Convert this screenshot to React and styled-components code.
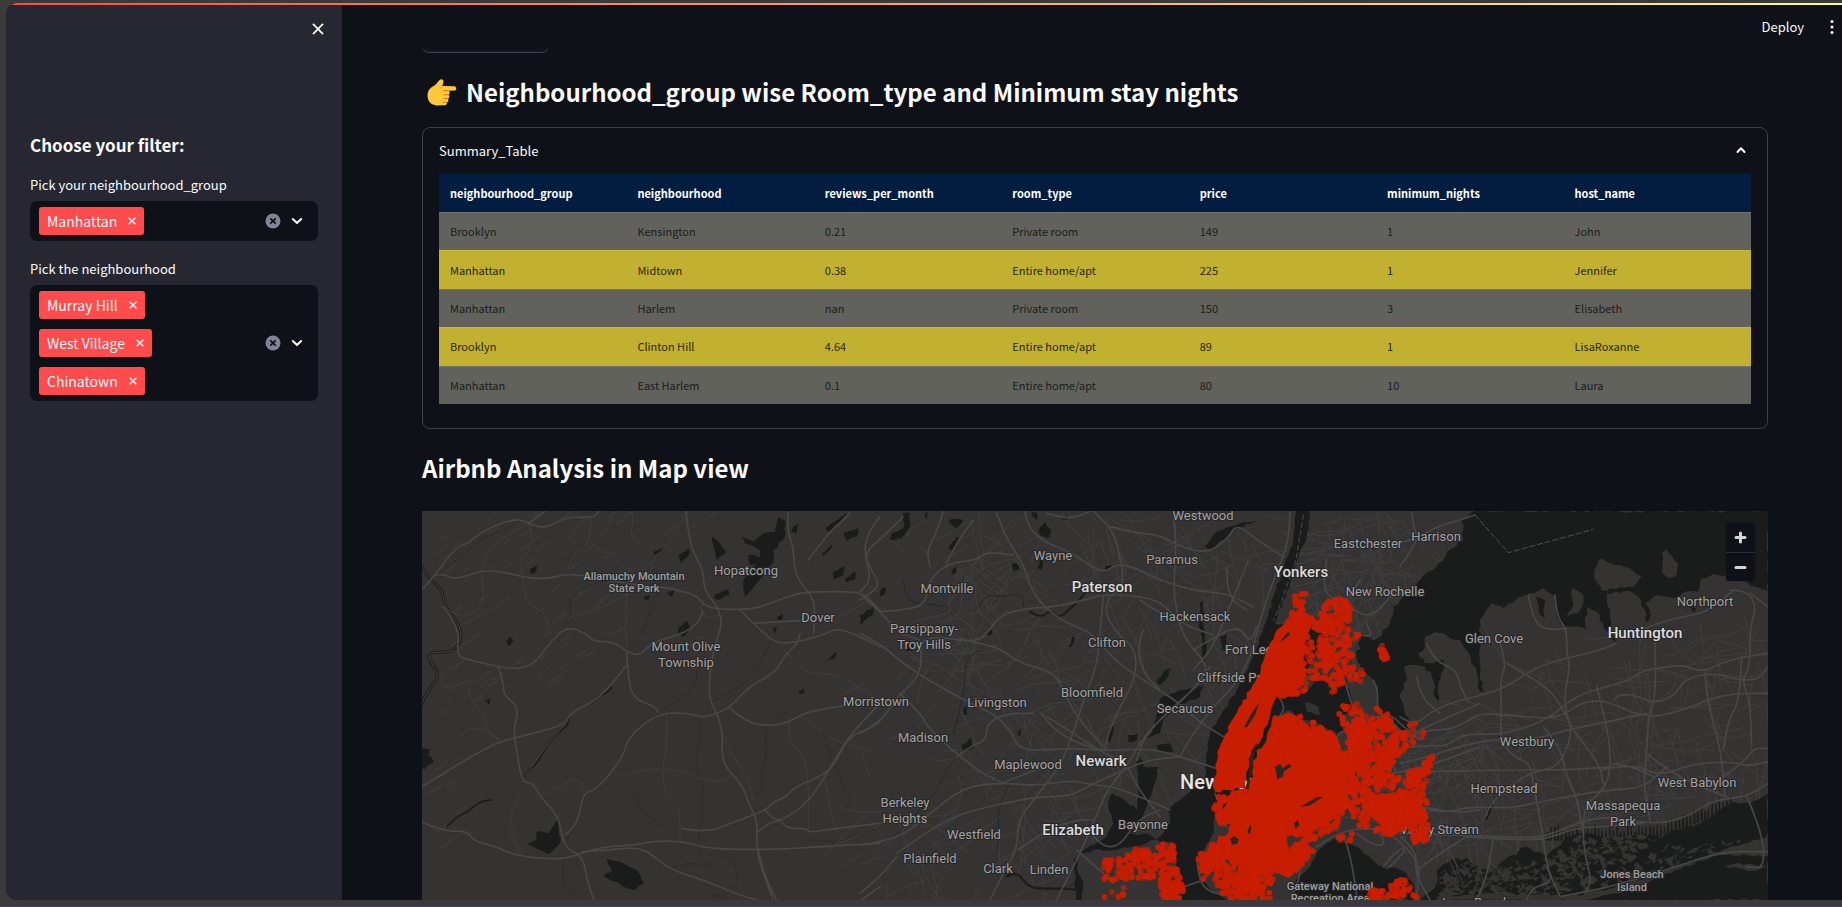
import React, { useState } from "react";
import styled, { createGlobalStyle } from "styled-components";

const sans = `"Noto Sans CJK SC", "Noto Sans", sans-serif`;

const GlobalStyle = createGlobalStyle`
  * { box-sizing: border-box; }
  body { margin: 0; background: #3a3a39; color: #fafafa; font-family: ${sans}; font-size: 14px; }
  button, input { font: inherit; color: inherit; }
`;

/* ---------- shell ---------- */
const Frame = styled.div`
  height: 100vh;
  padding: 3px 0 7px 6px;
  display: flex;
  background: linear-gradient(#3a3a39 0 calc(100% - 1px), #493f5c calc(100% - 1px));
`;
const Window = styled.div`
  flex: 1;
  min-width: 0;
  display: flex;
  flex-direction: column;
  background: #0e1117;
  border-radius: 12px 0 0 12px;
  overflow: hidden;
`;
const Decoration = styled.div`
  flex: none;
  height: 2px;
  background: linear-gradient(90deg, #ff4b4b, #fffd80);
`;
const Body = styled.div`
  flex: 1;
  min-height: 0;
  display: flex;
`;
const Sidebar = styled.aside`
  flex: none;
  width: 336px;
  padding: 18px 24px;
  background: #262730;
`;
const CloseRow = styled.div`
  display: flex;
  justify-content: flex-end;
  margin: 0 -6px 98px 0;
`;
const IconButton = styled.button`
  display: grid;
  place-items: center;
  padding: 0;
  border: 0;
  background: none;
  cursor: pointer;
  svg { display: block; }
`;
const SidebarTitle = styled.h2`
  margin: 0 0 16px;
  font-size: 17px;
  line-height: 24px;
  font-weight: 600;
`;
const Field = styled.div`
  margin-bottom: 16px;
`;
const Label = styled.label`
  display: block;
  height: 28px;
  font-size: 13px;
  line-height: 24px;
`;
const SelectBox = styled.div`
  display: flex;
  align-items: center;
  gap: 10px;
  padding: 6px 15px 6px 9px;
  border-radius: 7px;
  background: #0e1117;
`;
const Tags = styled.div`
  flex: 1;
  min-width: 0;
  display: flex;
  flex-wrap: wrap;
  gap: 10px;
`;
const Tag = styled.span`
  display: flex;
  align-items: center;
  gap: 11px;
  height: 28px;
  padding: 0 8px;
  border-radius: 3px;
  background: #ff4b4b;
  font-size: 14px;
  line-height: 28px;
`;
const TagInput = styled.input`
  flex: 1;
  width: 20px;
  min-width: 20px;
  padding: 0;
  border: 0;
  outline: 0;
  background: none;
`;

/* ---------- main column ---------- */
const Main = styled.div`
  flex: 1;
  min-width: 0;
  display: flex;
  flex-direction: column;
`;
const Header = styled.header`
  flex: none;
  height: 44px;
  padding-right: 8px;
  display: flex;
  align-items: center;
  justify-content: flex-end;
  gap: 26px;
`;
const DeployButton = styled.button`
  padding: 0;
  border: 0;
  background: none;
  font-size: 13px;
  line-height: 20px;
`;
const Scroller = styled.main`
  flex: 1;
  min-height: 0;
  padding: 0 74px 0 80px;
  overflow-y: auto;
  scrollbar-width: none;
`;
const DownloadButton = styled.button`
  display: block;
  width: 127px;
  height: 40px;
  margin-top: -36px;
  border: 1px solid #41444c;
  border-radius: 7px;
  background: #13161d;
`;
const Title = styled.h3`
  display: flex;
  align-items: center;
  gap: 8px;
  margin: 21px 0 ${(p) => (p.$tight ? 17 : 25)}px;
  font-size: 24px;
  line-height: 36px;
  font-weight: 600;
`;
const Expander = styled.section`
  padding: 0 16px 24px;
  border: 1px solid #3d4045;
  border-radius: 8px;
`;
const Summary = styled.button`
  width: 100%;
  height: 46px;
  padding: 0 4px 2px 0;
  display: flex;
  align-items: center;
  justify-content: space-between;
  border: 0;
  background: none;
  font-size: 13px;
`;
const Table = styled.table`
  width: 100%;
  height: 230px;
  table-layout: fixed;
  border-collapse: collapse;
  font-size: 11px;
  line-height: 18px;
  text-align: left;
`;
const HeadCell = styled.th`
  height: 38px;
  padding: 0 11px;
  background: #021d3f;
  color: #ffffff;
  font-weight: 700;
`;
const Row = styled.tr`
  background: ${(p) => (p.$gold ? "#c2b131" : "#62625c")};
  color: ${(p) => (p.$gold ? "#29260a" : "#1c1c1b")};
  box-shadow: inset 0 1px 0 rgba(255, 255, 255, 0.1);
`;
const Cell = styled.td`
  padding: 0 11px;
`;

/* ---------- map ---------- */
const MapPanel = styled.div`
  position: relative;
  height: 500px;
  background: #343332;
`;
const MapCanvas = styled.svg`
  display: block;
  width: 100%;
  height: 100%;
`;
const Place = styled.text`
  font-family: Roboto, "Liberation Sans", sans-serif;
  font-size: ${(p) => ({ xl: 20, lg: 15, md: 13, sm: 11 })[p.$size]}px;
  font-weight: ${(p) => (p.$size === "md" ? 400 : 500)};
  fill: ${(p) => ({ xl: "#e6e6e6", lg: "#dcdcdc", md: "#a2a2a2", sm: "#a0a0a0" })[p.$size]};
  stroke: #262626;
  stroke-width: 2px;
  stroke-linejoin: round;
  paint-order: stroke;
`;
const ZoomControl = styled.div`
  position: absolute;
  top: 12px;
  right: 13px;
  width: 29px;
  border-radius: 3px;
  background: #0e1117;
  box-shadow: 0 0 0 1px rgba(0, 0, 0, 0.1);
`;
const ZoomButton = styled(IconButton)`
  width: 29px;
  height: 29px;
  & + & { border-top: 1px solid #2a2c33; }
`;

/* ---------- icons ---------- */
const Cross = ({ size, width, color = "currentColor" }) => (
  <svg width={size} height={size} viewBox="0 0 10 10" stroke={color} strokeWidth={width} fill="none">
    <path d="M.8.8 9.2 9.2M9.2.8.8 9.2" />
  </svg>
);
const Chevron = ({ up, size = 12 }) => (
  <svg width={size} height={size} viewBox="0 0 12 12" stroke="#fafafa" strokeWidth="2" fill="none" strokeLinecap="round" strokeLinejoin="round">
    <path d={up ? "M2.500 8 6 4.200l3.500 3.800" : "M1.800 4 6 8l4.200-4"} />
  </svg>
);
const ClearIcon = () => (
  <svg width="16" height="16" viewBox="0 0 16 16">
    <circle cx="8" cy="8" r="7.500" fill="#808495" />
    <path d="m5.300 5.300 5.400 5.400M10.700 5.300l-5.400 5.400" stroke="#0e1117" strokeWidth="1.700" />
  </svg>
);
const Kebab = () => (
  <svg width="4" height="16" viewBox="0 0 4 16" fill="#fafafa">
    <circle cx="2" cy="2.500" r="1.500" />
    <circle cx="2" cy="8" r="1.500" />
    <circle cx="2" cy="13.500" r="1.500" />
  </svg>
);
const PointingHand = () => (
  <svg width="36" height="30" viewBox="0 0 36 30" role="img" aria-label="pointing right">
    <path d="M18.500 2.500c2-.8 3.400 1 2.900 2.800L20.300 9l12 .2c2.600.1 2.700 4.300 0 4.400l-6 .2c1.800.6 1.900 3.200.2 3.900 1.300 1 1.100 3.400-.6 3.900 1.100 1.100.6 3.400-1 3.800.3 1.800-.8 2.800-2.600 2.900l-7.300.1C9 28.400 5.500 24.300 5.500 18.600c0-5.200 3.200-8.200 6.500-9.800 2.600-1.300 4.400-5.400 6.500-6.300z" fill="#ffc83d" />
    <path d="M25.800 13.700h-4.300M26.500 17.800h-4.600M25.900 21.700h-4M24.800 25.400h-3.300" stroke="#d67d00" strokeWidth="1" fill="none" strokeLinecap="round" />
    <path d="M20.300 9 19 12.500" stroke="#e89b18" strokeWidth=".8" fill="none" />
  </svg>
);

/* ---------- map data ---------- */
const seeded = (seed) => {
  let s = seed * 2654435761;
  return () => {
    s = (s + 0x6d2b79f5) | 0;
    let t = Math.imul(s ^ (s >>> 15), 1 | s);
    t = (t + Math.imul(t ^ (t >>> 7), 61 | t)) ^ t;
    return ((t ^ (t >>> 14)) >>> 0) / 4294967296;
  };
};
const pts = (str) => str.trim().split(/\s+/).map((p) => p.split(",").map(Number));
const inside = ([x, y], poly) => {
  let hit = false;
  for (let i = 0, j = poly.length - 1; i < poly.length; j = i++) {
    const [xi, yi] = poly[i];
    const [xj, yj] = poly[j];
    if (yi > y !== yj > y && x < ((xj - xi) * (y - yi)) / (yj - yi) + xi) hit = !hit;
  }
  return hit;
};
const scatter = (outline, count, seed) => {
  const poly = pts(outline);
  const xs = poly.map((p) => p[0]);
  const ys = poly.map((p) => p[1]);
  const [x0, x1, y0, y1] = [Math.min(...xs), Math.max(...xs), Math.min(...ys), Math.max(...ys)];
  const rnd = seeded(seed);
  const out = [];
  let guard = 0;
  while (out.length < count && guard++ < count * 20) {
    const p = [x0 + rnd() * (x1 - x0), y0 + rnd() * (y1 - y0)];
    if (inside(p, poly)) out.push(p);
  }
  return out;
};
/* adds small irregular steps to a shoreline */
const rough = (outline, amp, seed) => {
  const rnd = seeded(seed);
  const p = pts(outline);
  let d = "";
  p.forEach(([x, y], i) => {
    const [nx, ny] = p[(i + 1) % p.length];
    const n = Math.max(1, Math.round(Math.hypot(nx - x, ny - y) / 14));
    for (let k = 0; k < n; k++) {
      const t = k / n;
      const j = k ? amp : 0;
      d += `${d ? "L" : "M"}${Math.round(x + (nx - x) * t + (rnd() - 0.5) * j)} ${Math.round(y + (ny - y) * t + (rnd() - 0.5) * j)}`;
    }
  });
  return d + "Z";
};
const curve = (str) => {
  const p = pts(str);
  let d = `M${p[0]}`;
  for (let i = 1; i < p.length - 1; i++) {
    d += `Q${p[i]} ${(p[i][0] + p[i + 1][0]) / 2},${(p[i][1] + p[i + 1][1]) / 2}`;
  }
  return d + `L${p[p.length - 1]}`;
};
/* side streets: a loose, wandering grid within an outline */
const streets = (outline, count, seed, lean) => {
  const rnd = seeded(seed);
  return scatter(outline, count, seed + 5).map(([x, y]) => {
    let a = lean + (rnd() < 0.5 ? 0 : Math.PI / 2) + (rnd() - 0.5) * 0.7;
    let d = `M${Math.round(x)} ${Math.round(y)}`;
    const steps = 3 + Math.floor(rnd() * 5);
    for (let i = 0; i < steps; i++) {
      a += (rnd() - 0.5) * 0.6;
      const l = 14 + rnd() * 26;
      d += `l${Math.round(Math.cos(a) * l)} ${Math.round(Math.sin(a) * l)}`;
    }
    return d;
  }).join("");
};

const WEST_ROADS = [
  "6,270 45,225 110,140 145,130 195,88 290,54 325,70 375,86 440,50 520,54 538,33",
  "45,225 75,222 100,240 205,205 325,235 390,235 450,220 560,240 690,262 735,262 770,270 830,285 860,325 960,330 1030,320 1120,282 1180,275 1320,275 1350,300 1380,332",
  "325,70 375,33", "798,33 805,100 820,160 850,210 852,270 885,310 900,340 905,380 880,450 862,585 892,640 908,700 905,760 915,800 970,860 985,910 1012,960 1010,1040 1022,1100 1060,1200",
  "1105,33 1100,85 1120,140 1122,200 1140,250 1180,290 1185,350 1180,400",
  "1000,370 1140,362", "960,330 1030,400 1080,436 1200,410 1250,384 1310,405 1380,440",
  "1140,400 1135,430 1090,470 1070,515 985,560 930,625 850,655 810,640 715,638 625,710 610,770 535,865 490,880 480,940 460,985 435,1005",
  "70,320 118,380 110,465 140,478 235,500 295,508 345,490 380,440 440,376 505,405 520,425 580,425 620,455 660,468 690,430 820,390 850,335",
  "235,500 250,545 250,585 298,622 280,690 290,750 305,845 340,850 360,890 418,950 430,1040 490,1070 500,1140 522,1200",
  "6,860 150,770 240,725 290,712 400,685 440,665 450,640 520,605 570,560 620,495",
  "620,455 625,540 640,595 705,620 715,638", "6,966 70,995 140,992 165,1025 215,1035 290,1068 420,1080 490,1058 550,1040 650,1035 700,1022 790,1025 850,1042 930,1048 1090,1048 1230,1038 1380,1030",
  "490,1055 560,1050 650,1042 690,1060 750,1108 850,1140 950,1182 1010,1200",
  "785,985 860,998 930,970 1040,930 1060,905 1100,890 1125,860 1200,830 1240,800 1285,710 1350,685 1380,665",
  "1010,1000 1040,970 1085,962 1170,905 1250,770 1290,705 1380,610",
  "930,625 980,670 1060,678 1110,665 1150,640 1220,625 1270,618",
  "1085,962 1090,985 1160,985 1165,998 1250,985 1380,970", "1035,930 1055,955 1085,962",
  "1165,180 1220,105 1270,60 1290,38", "1380,50 1350,85 1330,150 1355,240 1320,275",
  "1012,1040 1030,1120 1070,1200", "1325,1200 1380,1160",
];
const WEST_LANES = [
  "75,320 110,355 165,340 195,300 180,210 215,130 325,70", "325,70 340,100 330,155 300,180 310,260 325,320 370,330 390,390",
  "515,55 510,130 470,150 440,210", "515,130 540,155 580,160 620,210", "575,33 580,70 520,120",
  "635,33 640,70 630,100 670,150", "798,50 770,80 750,130 700,170 690,230", "120,380 190,340 260,300 305,265",
  "145,560 150,600 195,650 200,690 240,725", "235,500 190,540 130,545 70,575 60,520 110,500", "150,685 200,690 240,720",
  "305,845 340,790 400,715 445,660", "360,890 430,850 480,830 490,880", "740,638 740,750 725,810 740,905 780,920 780,1020",
  "575,810 600,840 650,810 760,805 850,840 900,845 940,825", "905,700 950,790 990,850 1000,910",
  "1080,436 1120,480 1160,520 1250,520 1380,600", "1350,300 1300,330 1260,340 1240,380", "1110,665 1100,720 1150,760 1165,830 1165,1000",
  "1140,650 1200,690 1250,725 1380,760", "1215,840 1230,930 1250,990 1280,1035", "270,1000 300,1060 295,1068",
  "305,870 270,930 275,1000 310,1060", "620,440 615,350 620,280 630,200", "900,340 880,355 840,345 850,300", "1380,935 1290,940 1240,900 1215,850",
  "450,350 540,330 620,280 700,260", "1325,760 1340,820 1380,870", "820,450 800,430 850,400 870,470 865,520",
];
const WEST_STREAMS = [
  "50,225 130,165 190,110 260,88 300,60", "415,425 440,400 475,370 450,365 450,290 500,260 560,240", "830,470 840,560 760,610 715,640",
  "830,650 850,690 825,760 830,820 850,850 845,900 850,960 830,1020 840,1080 890,1100 900,1070 935,1050",
  "1120,630 1060,650 1035,690 1040,780 1020,810 1030,870 1000,885", "1210,690 1230,780 1260,820 1270,870 1295,890 1280,930",
  "1060,420 1020,480 1010,520 960,560 900,590 860,620", "630,875 655,890 650,920 690,950 725,975", "430,1080 425,1130 440,1170 470,1180 472,1200",
  "750,1105 800,1085 870,1100", "930,1060 960,1130 940,1170 910,1190 870,1185", "720,260 690,330 670,400 620,460",
  "500,880 470,970 440,1020", "1170,1020 1260,1030 1300,1000 1380,985",
];
const WEST_LAKES = [
  "965,110 1000,125 1030,100 1065,95 1075,50 1095,60 1095,110 1060,150 1060,185 1010,250 975,290 970,240 1020,185 1020,150 975,130",
  "985,165 1040,170 1060,190 990,195", "1120,80 1138,70 1130,100 1112,95", "875,110 900,130 918,155 890,180 885,155", "885,285 925,268 928,285 895,300 882,295",
  "775,165 805,145 810,160 785,190", "700,155 730,142 725,155 705,165", "330,205 350,195 345,218 332,222", "258,425 270,410 280,420 268,440",
  "775,385 800,362 810,385 790,410 775,400", "740,280 762,270 755,290", "672,290 690,285 685,300 675,300", "1072,350 1088,342 1088,358 1074,360",
  "1060,380 1072,385 1062,405", "1270,100 1315,85 1310,110 1280,122", "1205,160 1240,132 1225,155 1210,168", "1240,215 1275,198 1270,225 1240,238",
  "1275,235 1305,215 1305,240 1280,248", "1340,330 1360,318 1358,345 1320,375 1325,360", "1215,485 1250,455 1245,475", "1135,575 1150,566 1155,578 1140,582",
  "195,600 212,598 208,615", "6,745 30,748 25,765 42,785 15,808 6,805", "318,1035 350,1020 350,995 385,1000 415,955 420,1030 385,1062 340,1040",
  "560,1078 600,1085 650,1110 672,1150 645,1170 610,1160 550,1128 575,1115",
  "1215,85 1285,38 1265,60 1225,95",
];
const WEST_CREEKS = ["308,840 325,808 345,798 380,740 400,715 425,688 440,680 448,656", "82,978 110,950 140,938 165,915 190,902 214,900", "515,608 540,585 560,580 575,562"];
const CENTRAL_ROADS = [
  "0,400 60,430 140,500 240,560 340,615 400,640 450,690 480,750 560,750 640,745 740,752 870,745 960,770 1070,805",
  "0,700 60,670 120,580 160,550 185,500 180,420 240,410 320,425 370,415 420,345 500,325 560,322 640,310 720,285 800,285 900,300 960,370 1060,405",
  "0,280 60,335 120,400 180,420", "300,415 360,430 420,445 480,490 560,510 600,540 640,640 730,740",
  "410,40 440,120 490,190 510,260 550,320 620,370 700,400 760,480 880,560 960,610 1010,660 1090,710",
  "60,335 150,330 200,305 200,250 260,190 350,180 380,155 460,165",
  "495,33 500,80 560,130 620,150 680,190 730,220 770,190 830,205 900,240 960,260 1020,275 1100,280 1180,320",
  "700,33 750,80 770,130 785,190 790,260 745,290 735,340 770,400 830,450 825,540 780,620 745,700 735,750",
  "750,80 830,100 900,105 960,140 1040,160 1100,120 1130,70 1190,120 1270,170",
  "940,33 950,130 940,260 950,340 975,420 1050,500 1010,560 940,620 880,680 850,720 830,780",
  "690,33 640,60 560,40", "1290,33 1290,120 1240,240 1200,360 1170,480 1120,560 1060,620 1000,700 960,770",
  "1100,200 1100,290 1160,330", "1165,180 1130,270 1100,340 1060,440 1000,510",
  "0,1035 110,1020 200,950 310,860 430,848 530,858 630,840 700,855 760,860 840,890 930,930",
  "110,1060 180,1010 260,960 340,930 480,900 540,890 630,890 690,855 770,820 860,780 960,770",
  "0,1180 60,1130 110,1070", "390,1200 440,1100 470,1050 475,960 520,900 600,800 640,700 670,600 710,500 720,400 730,290",
  "590,1200 660,1060 700,970 740,870 800,800 850,710 920,640 990,580 1050,500",
  "430,848 380,830 300,770 210,690 180,640 120,580", "290,770 330,740 380,720 380,670 440,640 520,640",
  "560,650 640,700 730,760 800,790 830,860 900,950", "545,640 570,680 650,730 730,750",
  "430,848 500,820 560,800", "650,1050 720,1110 760,1150", "680,980 720,1040 780,1040 830,960 900,930",
  "475,1050 540,1000 640,960 700,960", "850,390 830,440 850,520 900,570", "840,300 880,330 940,350", "1000,450 1080,400 1140,380 1170,430 1190,380",
  "130,50 70,110 10,160 40,220 60,260 0,300", "250,33 230,100 200,150 210,200", "340,60 300,110 260,190",
];
const CENTRAL_LAKES = [
  "130,38 150,38 150,80 125,115 90,120 95,100 130,85", "195,38 205,38 200,60", "265,60 310,60 290,85 275,75", "265,145 290,110 300,115 275,150",
  "275,210 290,198 288,218 275,222", "540,80 555,65 575,90 565,115 540,105", "515,36 530,38 530,60 518,50", "600,55 625,45 620,60", "455,190 470,190 478,210 460,212",
  "540,180 550,185 545,210 532,205", "60,275 75,260 72,285 58,290", "0,345 45,330 20,355 0,372", "735,200 770,190 750,205 735,220", "625,440 640,408 645,412 632,442",
  "380,400 395,390 398,402 385,408", "135,435 160,430 160,450 140,455", "310,625 322,618 322,645 312,645", "472,700 480,688 480,710",
  "305,735 330,712 342,745 310,755", "805,705 835,700 830,720 805,725", "740,720 755,680 762,680 750,725",
  "890,550 910,515 935,505 925,530 900,555", "875,700 890,640 905,590 960,570 1030,560 1020,590 950,620 910,660 900,700 840,720",
  "1035,140 1060,105 1110,80 1190,62 1120,90 1050,150", "1085,450 1080,410 1100,400 1095,450", "890,735 930,730 940,755 895,755",
  "1020,310 1032,300 1030,370 1040,450 1035,500 1025,480 1028,420 1018,370",
];
const HUDSON = "1308,33 1300,120 1275,190 1240,290 1205,400 1175,480 1130,570 1080,650 1050,700 1040,760 1035,830 1010,860 960,900 925,930 930,970 900,1010 860,1030 820,1040 760,1050 700,1050 650,1070 655,1120 670,1150 665,1200 650,1200 645,1120 640,1080 680,1045 740,1010 760,970 745,920 755,880 800,905 830,930 835,870 830,800 840,760 850,800 895,800 885,850 860,920 835,975 800,1005 860,1000 900,1025 940,1030 960,1090 975,1200 1060,1200 1010,1150 1010,1080 1060,1000 1060,960 1150,860 1400,400 1245,370 1290,250 1312,180 1340,110 1350,33";
const BAYS = [
  "330,470 355,425 400,395 455,380 480,345 520,400 550,340 570,400 585,440 540,470 560,500 525,530 500,505 470,490 430,480 385,450",
  "285,560 300,545 300,620 270,690 255,700 258,640",
  "400,975 430,940 470,880 520,835 560,850 590,860 680,930 700,920 740,940 770,1000 770,1020 400,1020",
  "60,1020 50,920 40,860 20,840 90,700 160,700 160,820 110,900 120,960 200,1020",
];
const SOUND = "225,33 1104,33 1104,270 1070,262 1040,245 985,225 940,222 905,235 895,275 850,278 835,292 760,290 735,310 752,335 740,350 715,290 690,272 620,280 630,330 636,420 650,425 610,385 590,335 560,322 555,370 560,388 500,380 482,370 470,330 465,290 430,265 390,280 330,310 310,325 275,310 240,360 235,390 262,420 240,440 240,520 252,575 240,575 230,520 200,450 180,420 105,395 75,410 75,440 55,460 75,490 130,480 130,510 115,560 115,605 105,590 95,530 75,500 25,495 12,500 22,540 0,580 14,640 30,660 20,690 0,690 -20,665 -65,620 -65,560 -90,530 -120,510 -130,470 -115,400 -80,420 -60,410 -30,370 -20,320 20,280 60,240 100,210 150,150 190,120 185,60";
const SOUTH_SEA = "1104,880 1050,910 1000,905 960,930 900,970 850,985 780,1005 700,1005 620,1015 560,1000 500,1010 440,1070 380,1040 300,1090 240,1110 200,1075 150,1080 110,1110 110,1150 60,1200 1104,1200";
const EAST_LAND = [
  "583,210 605,175 630,190 690,205 725,230 700,260 605,270 583,235", "785,160 800,148 835,190 825,230 800,232 785,215",
  "515,265 550,285 550,310 530,340 500,350 520,315", "480,1195 640,1165 800,1110 960,1055 1060,1020 1104,1010 1104,1068 960,1062 800,1120 660,1180 560,1200 480,1200",
  "975,1100 1020,1090 1104,1100 1060,1112", "110,1190 300,1180 480,1185 480,1200 110,1200",
];
const EAST_ROADS = [
  "35,33 40,80 55,120 0,200", "0,130 60,110 110,80 180,60 225,45", "0,720 70,690 150,690 200,665 240,640 310,645 380,650 450,655 500,640 540,610 600,600 660,620 700,640 770,650 850,630 920,600 1000,580 1104,580",
  "0,745 80,735 140,740 190,700 300,705 400,675 460,645 500,610 550,580 620,560 690,540 720,515 800,500 850,495 910,518 980,480 1104,460",
  "0,790 90,770 190,735 300,715 400,720 500,690 600,670 740,640", "0,650 40,680 100,630 180,600 250,585 320,560 380,520 440,490 520,470 600,450 650,430",
  "0,760 40,700 100,690", "465,285 470,350 500,385 500,460 510,500 490,600 510,680 560,740 600,800 610,850",
  "385,285 400,370 450,390 500,385", "300,430 320,490 300,540 305,640 300,720 340,770 390,790 400,850 430,1010 440,1100 480,1190",
  "320,490 390,530 450,570 490,630 520,690 480,800 400,815 340,850 280,900 250,960",
  "590,560 610,640 630,730 630,830 600,880 550,920 550,1050 575,1140 560,1170", "765,430 770,580 745,650 740,760 730,850 750,960",
  "915,520 920,600 960,740 970,830 975,890", "1025,470 1020,600 985,660 970,750", "1050,280 1104,320", "990,270 1040,270 1070,320 1050,380 1050,500 1025,540 1050,600 1055,740",
  "735,385 800,360 880,345 930,330 1000,270", "600,810 700,790 780,830 880,790 1000,785 1040,800 1104,785",
  "80,815 300,810 500,810 640,800", "90,930 140,940 200,920 330,925 400,910 500,890 620,870 730,865 800,800", "0,1000 200,1005 400,1015 460,1000 540,965 620,950 700,965 800,970 880,940 940,900 1040,890 1104,850",
  "190,1010 330,1020 440,1018 520,985 600,980 730,970", "1040,890 1085,990 1095,1105 1040,1100", "970,830 1040,780 1060,745 1104,745",
  "480,1190 560,1175 650,1155 800,1110 960,1055 1104,1055", "380,1200 390,1165 460,1145 440,1100", "0,1010 50,1050 45,1120 90,1200",
  "50,1110 120,1060 200,1010", "280,1010 270,1100 230,1200", "640,600 660,580 720,590 760,610 820,590 860,530 960,520 1010,540 1075,540 1104,500",
  "80,430 100,480 170,510 180,560 205,605", "50,530 60,590 120,640", "430,680 480,740 500,830 530,890 550,1000", "740,760 800,810 900,860 980,890", "640,790 700,800 760,830",
];
const HARBOUR_ROADS = [
  "355,410 380,440 350,480", "520,540 560,500 620,480 690,460 730,500 780,540", "550,350 570,420 600,490 640,540 690,600 710,640", "575,215 640,240 620,190", "640,360 655,390 650,450 690,480 740,530",
  "500,0 480,100 560,130 600,60", "560,130 620,190 700,100", "550,820 575,900 590,1010", "590,820 640,860 680,850 650,810", "670,920 720,860 740,870 690,920", "430,880 420,950 400,1000", "470,860 530,820 620,800 690,820",
  "60,985 130,960", "165,700 180,740", "700,640 800,620 960,560", "740,530 800,500 960,430", "780,740 880,760 960,750", "700,830 760,880 780,940 770,1000", "110,890 115,960 150,1000 250,1010",
];

const DENSE = [
  "400,165 375,190 350,210 325,265 290,355 235,445 195,525 172,575 170,640 158,670 165,695 200,690 258,685 258,640 275,570 300,545 330,470 350,410 380,400 430,375 445,330 430,310 440,240 455,190 430,155",
  "205,690 255,690 300,730 420,730 450,680 570,700 560,640 545,590 530,530 480,492 450,510 430,482 385,458 335,482 320,540 290,570 280,620 265,690",
  "560,522 585,492 625,510 635,560 600,590 570,585", "640,710 700,700 790,720 790,760 740,800 690,815 640,780 620,740", "390,860 430,845 460,875 430,910 400,915",
  "755,825 790,790 800,840 760,848",
];
const BROOKLYN = ["215,690 195,740 165,760 170,785 212,792 200,825 155,865 120,890 118,940 145,945 180,905 220,880 255,940 260,1000 300,1000 300,950 335,930 385,955 410,920 385,880 380,830 440,825 500,790 570,740 560,690 440,660 300,680"];
const CLUSTERS = [
  ["400,95 440,90 430,150 410,160", 16, 1], ["375,185 400,150 470,180 455,240 465,300 430,330 450,385 380,415 340,400 360,300", 150, 2],
  ["480,130 550,110 575,150 565,200 580,310 560,345 520,350 480,310 470,280 485,210", 190, 3], ["470,180 500,165 495,210 460,220", 14, 30],
  ["440,300 620,325 600,375 540,375 520,405 500,360 450,370", 48, 4], ["655,245 668,250 685,300 665,300", 14, 5], ["580,225 598,222 585,250", 4, 6],
  ["515,430 600,425 700,455 700,500 640,540 540,500", 46, 7], ["560,480 680,470 730,520 740,560 690,620 620,620 540,640 560,560", 170, 8],
  ["700,500 790,485 810,530 740,570", 15, 9], ["540,580 680,580 700,660 830,580 800,700 805,840 760,850 745,800 690,825 600,800 560,740", 460, 10],
  ["380,600 500,610 560,680 540,800 460,840 400,830 440,700", 200, 11], ["155,860 250,860 340,930 335,1020 215,1020 160,980", 230, 12], ["110,890 160,850 200,820 240,880 130,960", 60, 13],
  ["380,960 470,870 440,840 380,860 340,920", 50, 14], ["530,820 580,820 575,850 540,845", 7, 15], ["690,970 730,955 775,1000 770,1020 680,1015", 40, 16], ["625,995 665,985 680,1020 630,1020", 30, 17],
  ["0,850 40,855 50,920 70,990 60,1020 0,1020", 100, 18], ["-180,905 -130,880 0,860 0,950 -100,960 -170,960", 75, 19], ["-100,870 -30,865 -30,900 -100,905", 40, 20],
  ["-190,890 -130,920 -90,1020 -180,1020 -150,950", 12, 21], ["160,720 200,690 200,800 165,790", 20, 22],
  ["330,475 385,455 540,520 560,600 420,620", 80, 25],
];

const PLACES = [
  ["Allamuchy Mountain", 634, 580, "sm"], ["State Park", 634, 592, "sm"], ["Hopatcong", 746, 575, "md"], ["Dover", 818, 622, "md"],
  ["Mount Olive", 686, 651, "md"], ["Township", 686, 667, "md"], ["Morristown", 876, 706, "md"], ["Wayne", 1053, 560, "md"],
  ["Westwood", 1203, 520, "md"], ["Paramus", 1172, 564, "md"], ["Paterson", 1102, 592, "lg"], ["Montville", 947, 593, "md"],
  ["Hackensack", 1195, 621, "md"], ["Parsippany-", 924, 633, "md"], ["Troy Hills", 924, 649, "md"], ["Clifton", 1107, 647, "md"],
  ["Fort Lee", 1225, 654, "md", "start"], ["Cliffside Park", 1197, 682, "md", "start"], ["Bloomfield", 1092, 697, "md"], ["Livingston", 997, 707, "md"],
  ["Secaucus", 1185, 713, "md"], ["Madison", 923, 742, "md"], ["Maplewood", 1028, 769, "md"], ["Newark", 1101, 766, "lg"],
  ["New York", 1180, 789, "xl", "start"], ["Elizabeth", 1073, 835, "lg"], ["Bayonne", 1143, 829, "md"], ["Berkeley", 905, 807, "md"],
  ["Heights", 905, 823, "md"], ["Westfield", 974, 839, "md"], ["Plainfield", 930, 863, "md"], ["Clark", 998, 873, "md"], ["Linden", 1049, 874, "md"],
  ["Yonkers", 1301, 577, "lg"], ["New Rochelle", 1385, 596, "md"], ["Eastchester", 1368, 548, "md"], ["Harrison", 1436, 541, "md"],
  ["Northport", 1705, 606, "md"], ["Huntington", 1645, 638, "lg"], ["Glen Cove", 1494, 643, "md"], ["Westbury", 1527, 746, "md"],
  ["Hempstead", 1504, 793, "md"], ["West Babylon", 1697, 787, "md"], ["Massapequa", 1623, 810, "md"], ["Park", 1623, 826, "md"],
  ["Valley Stream", 1479, 834, "md", "end"], ["Jones Beach", 1632, 878, "sm"], ["Island", 1632, 891, "sm"], ["Long Beach", 1476, 907, "md"],
  ["Gateway National", 1330, 890, "sm"], ["Recreation Area", 1330, 902, "sm"],
];

const third = 1 / 3;
const Sheet = ({ x, y, children }) => <g transform={`translate(${x} ${y}) scale(${third})`}>{children}</g>;
const Lines = ({ list, color, width }) => (
  <path d={list.map(curve).join("")} fill="none" stroke={color} strokeWidth={width} strokeLinejoin="round" strokeLinecap="round" />
);
const Areas = ({ list, color, amp = 6, seed = 3 }) => list.map((r, i) => <path key={i} d={rough(r, amp, seed + i)} fill={color} />);

const WATER = "#1a1c1b";
const LAND = "#343332";
const ROAD = "#474747";
const LANE = "#3e3e3e";

const ridges = (() => {
  const rnd = seeded(77);
  return scatter("20,60 900,40 700,300 300,650 250,900 20,1080", 110, 61).map(([x, y]) => {
    const l = 10 + rnd() * 26;
    return `M${Math.round(x)} ${Math.round(y)}l${Math.round(l * 0.5)} -${Math.round(l * 0.25)}l${Math.round(l * 0.5)} -${Math.round(l * 0.45)}`;
  }).join("");
})();
const marshShades = (() => {
  const rnd = seeded(5);
  const zones = [["110,1110 200,1080 300,1090 440,1070 540,1010 560,1180 110,1190", 260], ["540,1005 700,1005 780,1010 700,1040 560,1080", 60], ["560,1060 820,1040 1000,1010 1060,1020 960,1050 800,1100 600,1160", 70]];
  return zones.flatMap(([outline, n], z) => scatter(outline, n, 41 + z)).map(([x, y]) => {
    let d = `M${Math.round(x)} ${Math.round(y)}`;
    const steps = 2 + Math.floor(rnd() * 3);
    for (let i = 0; i < steps; i++) d += `l${Math.round(4 + rnd() * 9)} ${Math.round((rnd() - 0.5) * 22)}`;
    return d + `l-${Math.round(8 + rnd() * 10)} ${Math.round(6 + rnd() * 8)}z`;
  }).join("");
})();
/* short inlets that comb the southern shore */
const inlets = (() => {
  const rnd = seeded(15);
  let d = "";
  for (let x = 440; x < 1000; x += 11) {
    const y = x < 560 ? 1010 : x < 760 ? 1008 : 1005 - (x - 760) * 0.38;
    const h = 12 + rnd() * 26;
    d += `M${x} ${Math.round(y - h)}l${Math.round(2 + rnd() * 3)} 0 2 ${Math.round(h + 12)}-7 0z`;
  }
  return d;
})();

const MapDrawing = () => (
  <MapCanvas viewBox="422 511 1346 500" preserveAspectRatio="xMidYMin slice" role="img" aria-label="Map of listings around New York">
    <Sheet x={420} y={500}>
      <path d={ridges} fill="none" stroke="#393938" strokeWidth="6" strokeLinecap="round" />
      <Lines list={WEST_STREAMS} color="#272827" width={2} />
      <Areas list={WEST_LAKES} color={WATER} />
      <Lines list={WEST_CREEKS} color={WATER} width={5} />
      <Lines list={["6,200 30,240 65,265 75,320 125,385 120,425 95,458 30,455 25,480 55,515 45,550 18,580 6,610"]} color="#1c1c1c" width={9} />
      <Lines list={["6,200 30,240 65,265 75,320 125,385 120,425 95,458 30,455 25,480 55,515 45,550 18,580 6,610"]} color="#5c5c5c" width={2} />
      <Lines list={WEST_LANES} color={LANE} width={3} />
      <Lines list={WEST_ROADS} color={ROAD} width={5} />
    </Sheet>
    <Sheet x={860} y={500}>
      <path d={streets("350,33 1290,33 1200,350 1030,750 950,900 700,980 600,1200 0,1200 0,900 300,800 200,400", 300, 12, 1)} fill="none" stroke={LANE} strokeWidth="3" />
      <path d={streets("0,33 350,33 400,400 200,700 0,800", 26, 18, 0.6)} fill="none" stroke={LANE} strokeWidth="3" />
      <path d={streets("1350,33 1700,33 1800,120 1500,500 1300,350", 130, 21, 1.2)} fill="none" stroke={LANE} strokeWidth="3" />
      <Lines list={["360,320 370,285 420,290 490,280 490,320", "130,240 135,300 180,310 280,320 240,340", "280,700 320,560 310,480 390,430", "100,1010 230,880 250,820 290,770", "410,1060 420,1000 410,930 450,850", "440,1130 470,1120 510,1170 600,1170 650,1150"]} color="#262726" width={3} />
      <Lines list={["510,335 540,355 570,330 600,355 630,325 660,300 680,270", "440,1130 470,1110 505,1165 600,1165 660,1170"]} color={WATER} width={6} />
      <Areas list={CENTRAL_LAKES} color={WATER} amp={8} />
      <Areas list={[HUDSON]} color={WATER} amp={7} />
      <Lines list={CENTRAL_ROADS} color={ROAD} width={5} />
      <path d="M1330 45 1308 180 1262 310 1240 362" fill="none" stroke="#626262" strokeWidth="2" strokeDasharray="16 7" />
    </Sheet>
    <Sheet x={1400} y={500}>
      <path d={streets("60,600 240,600 500,430 1104,330 1104,860 900,920 500,990 0,1000 0,700", 230, 9, 1.45)} fill="none" stroke={LANE} strokeWidth="3" />
      <Areas list={[SOUND, SOUTH_SEA]} color={WATER} amp={10} />
      <Areas list={EAST_LAND} color={LAND} amp={8} />
      <Areas list={["410,290 435,300 430,330 435,355 420,345", "755,340 740,370 735,350", "870,320 890,325 880,338"]} color={WATER} />
      <path d={inlets} fill={WATER} />
      <path d={marshShades} fill={LAND} />
      <Areas list={["250,960 275,905 280,915 262,958"]} color={WATER} amp={2} />
    </Sheet>
    <Sheet x={1160} y={560}>
      <Areas list={BAYS} color={WATER} amp={9} />
      <Areas list={["435,425 475,440 480,465 440,455", "600,830 700,820 740,880 700,925 620,870"]} color={LAND} />
      <path d={streets("560,560 960,480 960,860 780,850 760,700", 70, 31, 1)} fill="none" stroke={LANE} strokeWidth="3" />
      <Lines list={HARBOUR_ROADS} color={ROAD} width={5} />
    </Sheet>
    <Sheet x={1400} y={500}>
      <Lines list={EAST_ROADS} color={ROAD} width={5} />
      <path d="M225 45 325 158 580 88" fill="none" stroke="#6a6a6a" strokeWidth="2" strokeDasharray="18 6" />
    </Sheet>
    {PLACES.map(([name, x, y, size, anchor = "middle"]) => (
      <Place key={name} x={x} y={y} textAnchor={anchor} $size={size}>{name}</Place>
    ))}
    <Sheet x={1160} y={560}>
      <g fill="#c81e00">
        <Areas list={DENSE} color="#c81e00" amp={10} />
        <Areas list={BROOKLYN} color="#c81e00" amp={10} />
        {CLUSTERS.map(([outline, count, seed]) => (
          <g key={seed}>
            {scatter(outline, count, seed * 97).map(([x, y], i) => (
              <circle key={i} cx={Math.round(x)} cy={Math.round(y)} r="9" opacity={i % 4 ? 0.95 : 0.7} />
            ))}
          </g>
        ))}
      </g>
      <g fill="#2a2725">
        <path d="M298 426 272 465 252 502 262 500 285 466zM300 548 284 556 270 590 268 640 256 684 266 690 272 650 280 600 284 570zM345 620l15-8 8 12 20-12 6 8-22 14-4 16-16 8zM210 836l12-8 14 10-4 14-16 2zM420 742l50-30 20-2-40 26zM402 790l12-10 4 16-12 12zM385 215 365 238 362 246 390 224zM262 815l8-20 4 4-4 26z" />
      </g>
    </Sheet>
  </MapCanvas>
);

/* ---------- content ---------- */
const COLUMNS = ["neighbourhood_group", "neighbourhood", "reviews_per_month", "room_type", "price", "minimum_nights", "host_name"];
const ROWS = [
  ["Brooklyn", "Kensington", "0.21", "Private room", "149", "1", "John"],
  ["Manhattan", "Midtown", "0.38", "Entire home/apt", "225", "1", "Jennifer"],
  ["Manhattan", "Harlem", "nan", "Private room", "150", "3", "Elisabeth"],
  ["Brooklyn", "Clinton Hill", "4.64", "Entire home/apt", "89", "1", "LisaRoxanne"],
  ["Manhattan", "East Harlem", "0.1", "Entire home/apt", "80", "10", "Laura"],
];

function MultiSelect({ id, label, initial }) {
  const [values, setValues] = useState(initial);
  return (
    <Field>
      <Label htmlFor={id}>{label}</Label>
      <SelectBox>
        <Tags>
          {values.map((v) => (
            <Tag key={v}>
              {v}
              <IconButton aria-label={`Remove ${v}`} onClick={() => setValues(values.filter((o) => o !== v))}>
                <Cross size={8} width={1.8} />
              </IconButton>
            </Tag>
          ))}
          <TagInput id={id} role="combobox" aria-expanded="false" />
        </Tags>
        <IconButton aria-label="Clear all" onClick={() => setValues([])}><ClearIcon /></IconButton>
        <IconButton aria-label="Open"><Chevron /></IconButton>
      </SelectBox>
    </Field>
  );
}

export default function App() {
  const [open, setOpen] = useState(true);
  return (
    <Frame>
      <GlobalStyle />
      <Window>
        <Decoration />
        <Body>
          <Sidebar>
            <CloseRow>
              <IconButton aria-label="Close sidebar"><Cross size={12} width={1.5} /></IconButton>
            </CloseRow>
            <SidebarTitle>Choose your filter:</SidebarTitle>
            <MultiSelect id="group" label="Pick your neighbourhood_group" initial={["Manhattan"]} />
            <MultiSelect id="hood" label="Pick the neighbourhood" initial={["Murray Hill", "West Village", "Chinatown"]} />
          </Sidebar>
          <Main>
            <Header>
              <DeployButton>Deploy</DeployButton>
              <IconButton aria-label="Menu"><Kebab /></IconButton>
            </Header>
            <Scroller>
              <DownloadButton aria-label="Download data" />
              <Title $tight><PointingHand />Neighbourhood_group wise Room_type and Minimum stay nights</Title>
              <Expander>
                <Summary aria-expanded={open} onClick={() => setOpen(!open)}>
                  Summary_Table
                  <Chevron up={open} />
                </Summary>
                {open && (
                  <Table>
                    <thead>
                      <tr>{COLUMNS.map((c) => <HeadCell key={c} scope="col">{c}</HeadCell>)}</tr>
                    </thead>
                    <tbody>
                      {ROWS.map((r, i) => (
                        <Row key={i} $gold={i % 2 === 1}>{r.map((c, j) => <Cell key={j}>{c}</Cell>)}</Row>
                      ))}
                    </tbody>
                  </Table>
                )}
              </Expander>
              <Title>Airbnb Analysis in Map view</Title>
              <MapPanel>
                <MapDrawing />
                <ZoomControl>
                  <ZoomButton aria-label="Zoom in">
                    <svg width="13" height="13" viewBox="0 0 13 13"><path d="M6.500 2v9M2 6.500h9" stroke="#d4d4d4" strokeWidth="3" strokeLinecap="round" /></svg>
                  </ZoomButton>
                  <ZoomButton aria-label="Zoom out">
                    <svg width="13" height="13" viewBox="0 0 13 13"><path d="M2 6.500h9" stroke="#d4d4d4" strokeWidth="3" strokeLinecap="round" /></svg>
                  </ZoomButton>
                </ZoomControl>
              </MapPanel>
            </Scroller>
          </Main>
        </Body>
      </Window>
    </Frame>
  );
}
